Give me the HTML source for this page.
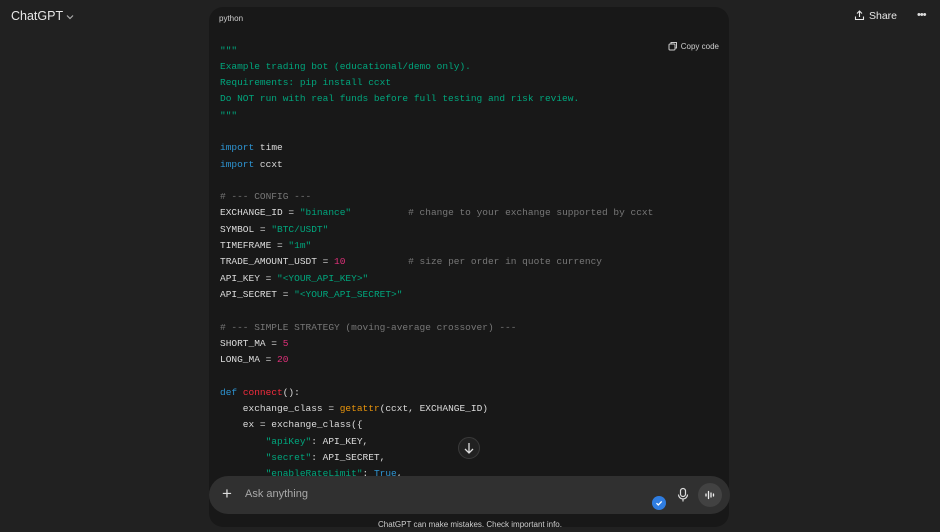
<!DOCTYPE html>
<html><head><meta charset="utf-8"><style>
*{margin:0;padding:0;box-sizing:border-box}
body{width:940px;height:532px;background:#212121;overflow:hidden;position:relative;font-family:"Liberation Sans",sans-serif;color:#ececec}
.brand{position:absolute;left:11px;top:9px;font-size:12.5px;color:#e8e8e8}
.brand svg{vertical-align:middle;margin-left:2px}
.share{position:absolute;left:854px;top:10px;font-size:10.5px;color:#e8e8e8}
.share svg{vertical-align:-2px;margin-right:4px}
.dots{position:absolute;left:917px;top:9px;font-size:11px;color:#ddd;letter-spacing:-1px}
.code{position:absolute;left:209px;top:7px;width:520px;height:520px;background:#181818;border-radius:14px;overflow:hidden}
.lang{position:absolute;left:10px;top:7px;font-size:8px;color:#cfcfcf}
.copy{position:absolute;right:10px;top:34px;font-size:8px;color:#cfcfcf}
.copy svg{vertical-align:-2px;margin-right:3px}
pre{position:absolute;left:11px;top:35.5px;font-family:"Liberation Mono",monospace;font-size:9.5px;line-height:16.3px;color:#dcdcdc}
.g{color:#00a67d}.b{color:#2e95d3}.n{color:#df3079}.c{color:#777}.r{color:#f22c3d}.o{color:#e9950c}
.down{position:absolute;left:458px;top:437px;width:22px;height:22px;border-radius:50%;background:#212121;border:1px solid #3a3a3a}
.input{position:absolute;left:209px;top:476px;width:521px;height:38px;background:#303030;border-radius:19px}
.plus{position:absolute;left:13px;top:8px;font-size:17px;color:#ddd;font-weight:300}
.ph{position:absolute;left:36px;top:12px;font-size:11px;color:#a8a8a8}
.chk{position:absolute;left:443px;top:20px;width:14px;height:14px;border-radius:50%;background:#2f7de1}
.mic{position:absolute;left:468px;top:11px}
.voice{position:absolute;left:489px;top:7px;width:24px;height:24px;border-radius:50%;background:#424242}
.foot{position:absolute;left:0;width:940px;top:519.5px;text-align:center;font-size:8px;color:#cfcfcf}
</style></head><body>
<div class="brand">ChatGPT<svg width="10" height="8" viewBox="0 0 10 8"><path d="M2 2.5l3 3 3-3" stroke="#aaa" fill="none" stroke-width="1.2"/></svg></div>
<div class="share"><svg width="11" height="11" viewBox="0 0 11 11"><path d="M5.5 7V1M3 3.5l2.5-2.5 2.5 2.5M1.5 6.5v3h8v-3" stroke="#e8e8e8" fill="none" stroke-width="1.1"/></svg>Share</div>
<div class="dots">•••</div>
<div class="code">
<div class="lang">python</div>
<div class="copy"><svg width="10" height="10" viewBox="0 0 10 10"><rect x="1" y="3" width="6" height="6" rx="1" stroke="#ccc" fill="none"/><path d="M3 3V1.5h5.5V7H7" stroke="#ccc" fill="none"/></svg>Copy code</div>
<pre><span class="g">"""
Example trading bot (educational/demo only).
Requirements: pip install ccxt
Do NOT run with real funds before full testing and risk review.
"""</span>

<span class="b">import</span> time
<span class="b">import</span> ccxt

<span class="c"># --- CONFIG ---</span>
EXCHANGE_ID = <span class="g">"binance"</span>          <span class="c"># change to your exchange supported by ccxt</span>
SYMBOL = <span class="g">"BTC/USDT"</span>
TIMEFRAME = <span class="g">"1m"</span>
TRADE_AMOUNT_USDT = <span class="n">10</span>           <span class="c"># size per order in quote currency</span>
API_KEY = <span class="g">"&lt;YOUR_API_KEY&gt;"</span>
API_SECRET = <span class="g">"&lt;YOUR_API_SECRET&gt;"</span>

<span class="c"># --- SIMPLE STRATEGY (moving-average crossover) ---</span>
SHORT_MA = <span class="n">5</span>
LONG_MA = <span class="n">20</span>

<span class="b">def</span> <span class="r">connect</span>():
    exchange_class = <span class="o">getattr</span>(ccxt, EXCHANGE_ID)
    ex = exchange_class({
        <span class="g">"apiKey"</span>: API_KEY,
        <span class="g">"secret"</span>: API_SECRET,
        <span class="g">"enableRateLimit"</span>: <span class="b">True</span>,
</pre>
</div>
<div class="down"><svg width="20" height="20" viewBox="0 0 20 20"><path d="M10 5v10M6 11l4 4 4-4" stroke="#ddd" fill="none" stroke-width="1.3"/></svg></div>
<div class="input">
<div class="plus">+</div>
<div class="ph">Ask anything</div>
<div class="chk"><svg width="14" height="14" viewBox="0 0 14 14"><path d="M4.5 7.2l1.8 1.8 3.4-3.6" stroke="#fff" fill="none" stroke-width="1.3"/></svg></div>
<svg class="mic" width="12" height="16" viewBox="0 0 12 16"><rect x="3.5" y="1.5" width="5" height="8" rx="2.5" stroke="#ddd" fill="none" stroke-width="1.2"/><path d="M1.5 7.5a4.5 4.5 0 009 0M6 12v2.5" stroke="#ddd" fill="none" stroke-width="1.2"/></svg>
<div class="voice"><svg width="24" height="24" viewBox="0 0 24 24"><path d="M8 11v2M10.5 8.5v7M13 10v4M15.5 11v2" stroke="#eee" stroke-width="1.3" stroke-linecap="round"/></svg></div>
</div>
<div class="foot">ChatGPT can make mistakes. Check important info.</div>
</body></html>
